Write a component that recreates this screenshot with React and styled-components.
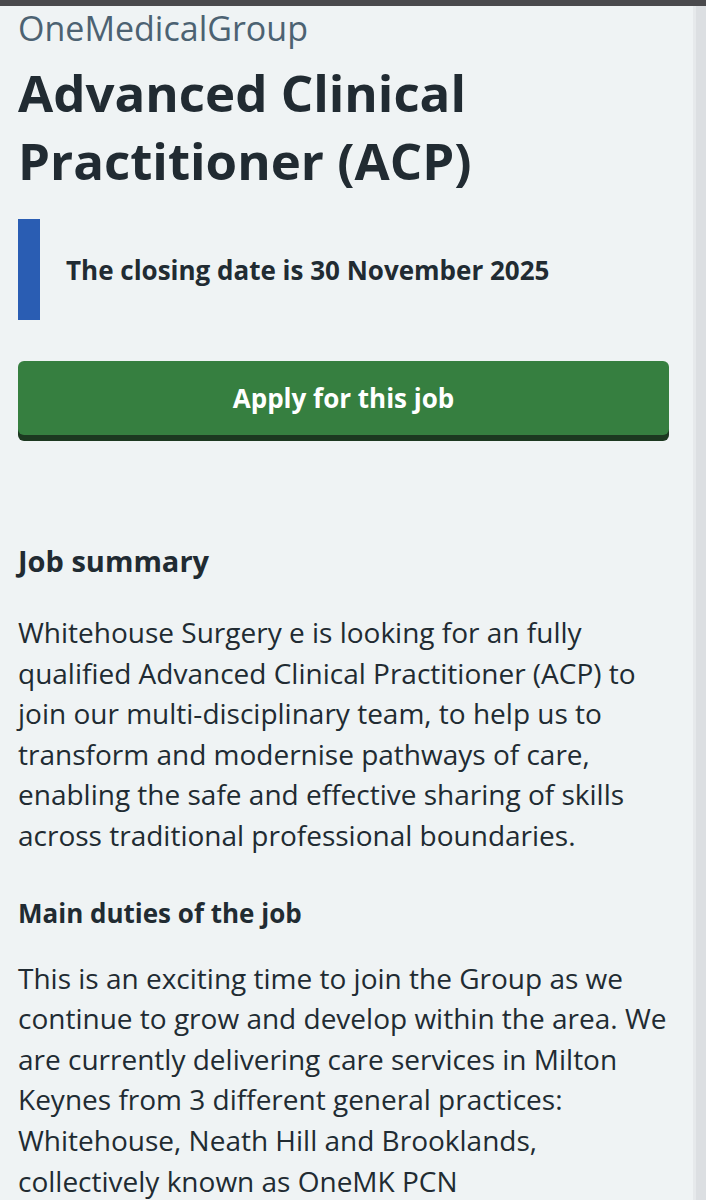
import styled, { createGlobalStyle } from 'styled-components'

const GlobalStyle = createGlobalStyle`
  html, body {
    margin: 0;
    padding: 0;
    background: #eff3f4;
  }
  body {
    font-family: "Open Sans", "Noto Sans", sans-serif;
    color: #212b32;
  }
`

const Screen = styled.div`
  width: 706px;
  height: 1200px;
  overflow: hidden;
  display: flex;
  flex-direction: column;
  background: #eff3f4;
`

const TopBar = styled.div`
  height: 6px;
  flex-shrink: 0;
  background: #4a4a4d;
`

const Body = styled.div`
  flex: 1;
  display: flex;
`

const Content = styled.main`
  flex: 1;
  padding: 2px 0 0 18px;
`

const ScrollTrack = styled.div`
  width: 10px;
  flex-shrink: 0;
  background: #dcdfe2;
  border-left: 3px solid #e6e9eb;
`

const Employer = styled.div`
  font-size: 34px;
  line-height: 40px;
  color: #4c6272;
`

const Title = styled.h1`
  margin: 10px 0 0;
  font-size: 51px;
  line-height: 68px;
  font-weight: 700;
`

const Inset = styled.div`
  margin-top: 25px;
  height: 101px;
  display: flex;
  align-items: center;
  border-left: 22px solid #2a5db3;
  padding-left: 26px;
  font-size: 26px;
  font-weight: 700;
`

const ApplyButton = styled.button`
  margin-top: 41px;
  width: 651px;
  height: 74px;
  border: none;
  border-radius: 6px;
  background: #367f40;
  box-shadow: 0 6px 0 #1c3820;
  color: #ffffff;
  font-family: inherit;
  font-size: 26px;
  font-weight: 700;
  display: block;
`

const Heading = styled.h2`
  margin: ${p => p.$top}px 0 0;
  font-size: ${p => p.$size}px;
  line-height: 40px;
  font-weight: 700;
`

const Paragraph = styled.p`
  margin: ${p => p.$top}px 0 0;
  font-size: 28px;
  line-height: 40.6px;
  white-space: nowrap;
`

const summary = [
  'Whitehouse Surgery e is looking for an fully',
  'qualified Advanced Clinical Practitioner (ACP) to',
  'join our multi-disciplinary team, to help us to',
  'transform and modernise pathways of care,',
  'enabling the safe and effective sharing of skills',
  'across traditional professional boundaries.'
]

const duties = [
  'This is an exciting time to join the Group as we',
  'continue to grow and develop within the area. We',
  'are currently delivering care services in Milton',
  'Keynes from 3 different general practices:',
  'Whitehouse, Neath Hill and Brooklands,',
  'collectively known as OneMK PCN'
]

const Lines = ({ lines }) => lines.map((line, i) => (
  <span key={i}>
    {line}
    {i < lines.length - 1 && <br />}
  </span>
))

export default function App() {
  return (
    <Screen>
      <GlobalStyle />
      <TopBar />
      <Body>
        <Content>
          <Employer>OneMedicalGroup</Employer>
          <Title>
            Advanced Clinical
            <br />
            Practitioner (ACP)
          </Title>
          <Inset>The closing date is 30 November 2025</Inset>
          <ApplyButton>Apply for this job</ApplyButton>
          <Heading $top={106} $size={29}>Job summary</Heading>
          <Paragraph $top={31}>
            <Lines lines={summary} />
          </Paragraph>
          <Heading $top={37} $size={26}>Main duties of the job</Heading>
          <Paragraph $top={25}>
            <Lines lines={duties} />
          </Paragraph>
        </Content>
        <ScrollTrack />
      </Body>
    </Screen>
  )
}
